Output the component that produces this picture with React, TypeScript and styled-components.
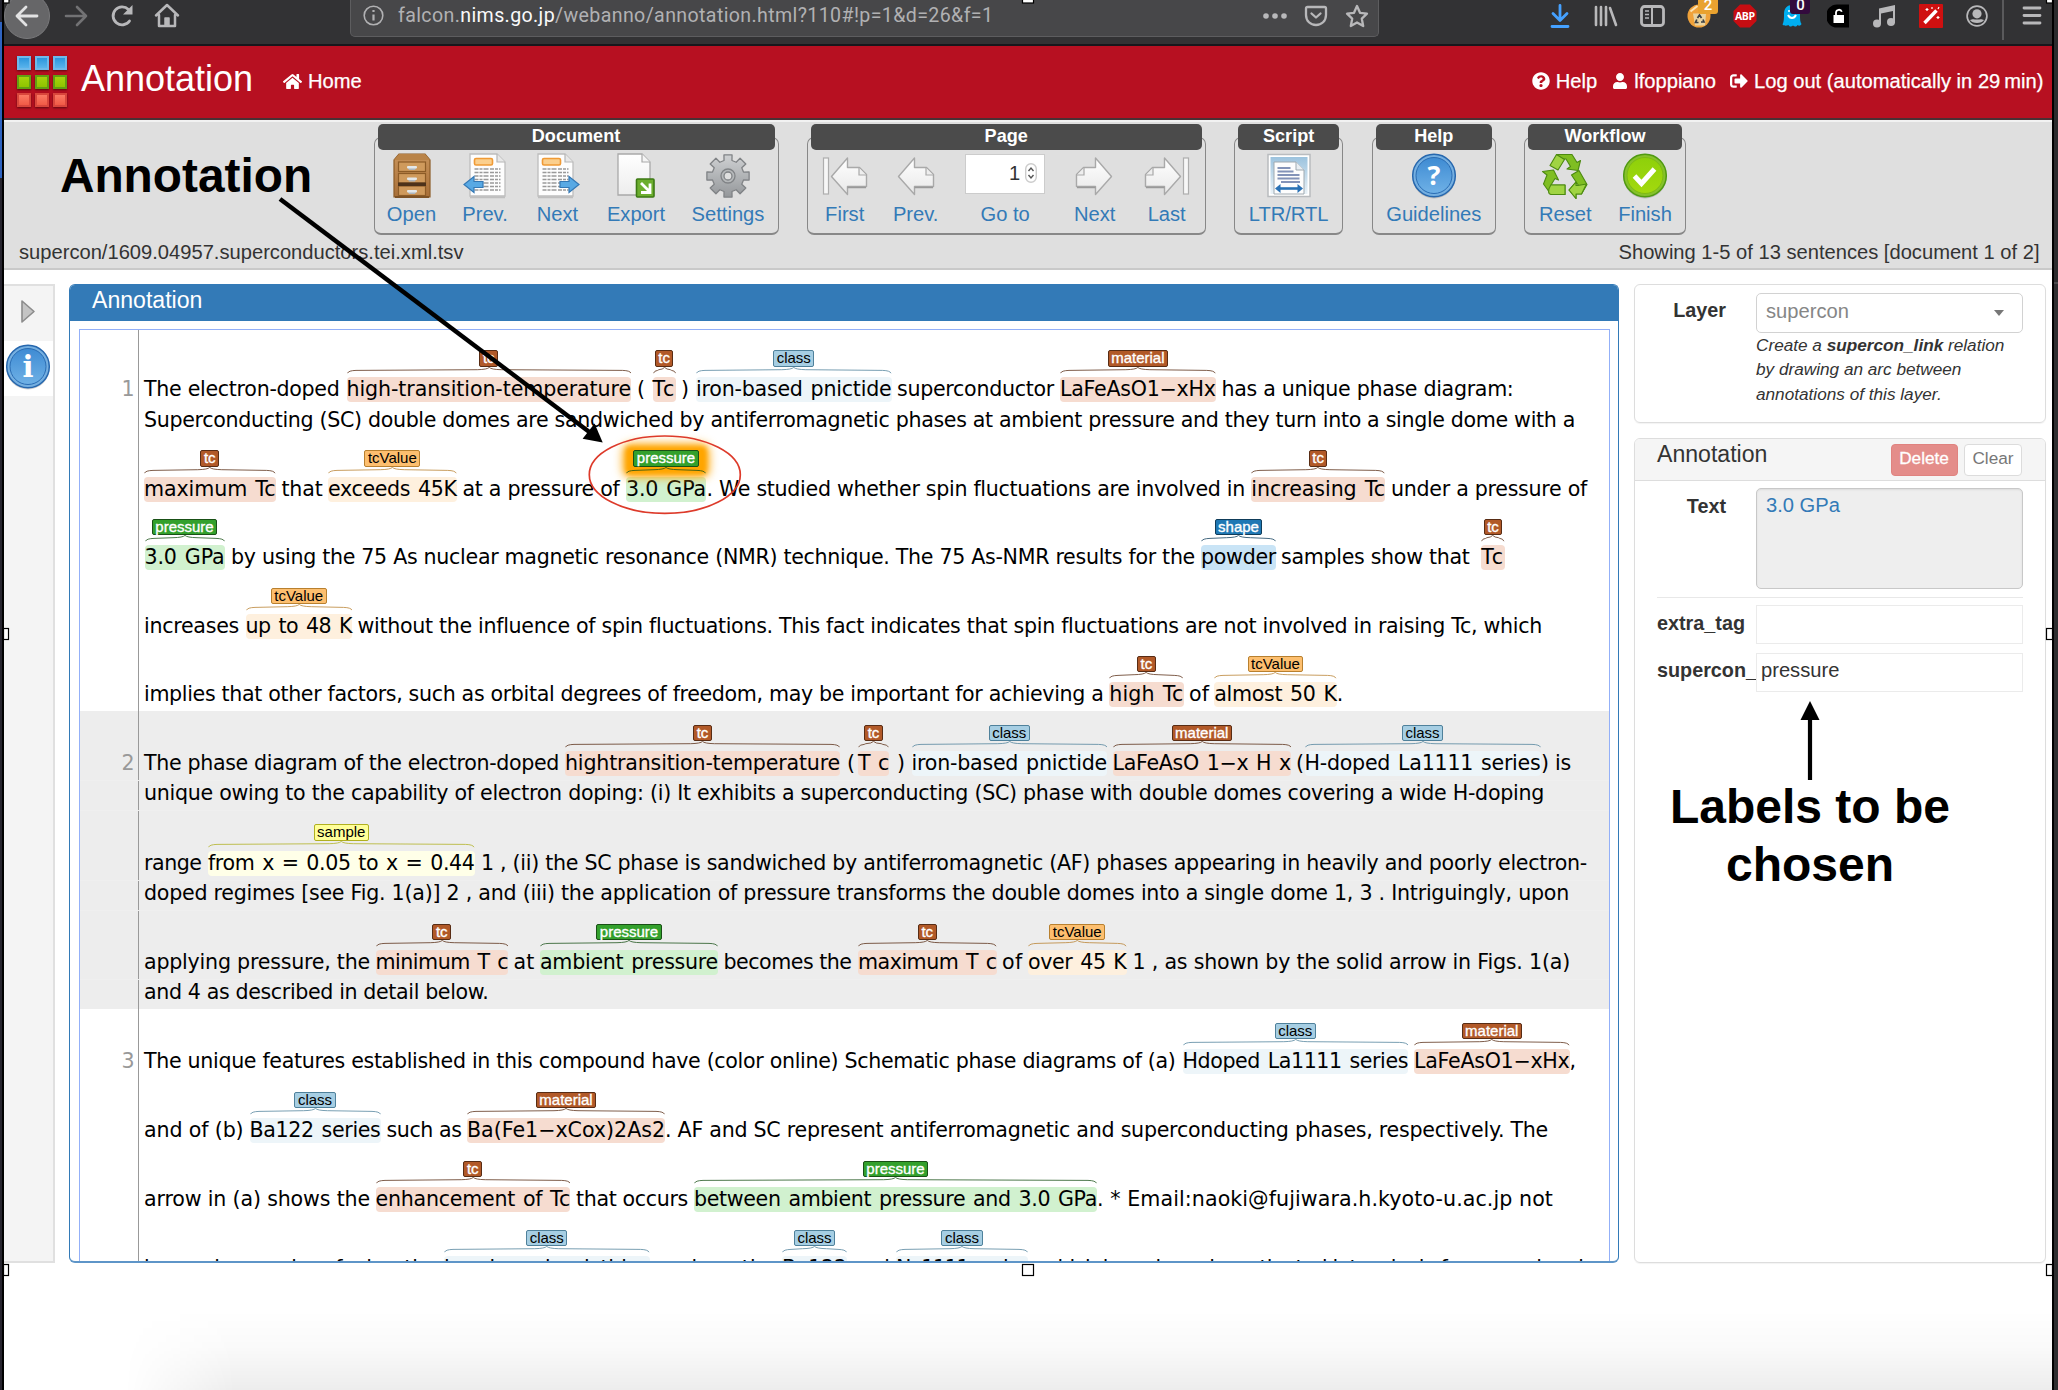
import React, { useLayoutEffect, useRef } from 'react';
import styled, { createGlobalStyle, css } from 'styled-components';
import { FaHome, FaQuestionCircle, FaUser, FaSignOutAlt } from 'react-icons/fa';

const sans = '"Liberation Sans", Arial, sans-serif';
const verdana = 'Verdana, "DejaVu Sans", sans-serif';

const GlobalStyle = createGlobalStyle`
  * { box-sizing: border-box; }
  body { margin: 0; background: #fff; font-family: ${sans}; font-size: 20.15px; color: #333; }
`;

/* ---------- frame ---------- */

const Screen = styled.div`
  position: relative;
  width: 2058px;
  height: 1390px;
  overflow: hidden;
  display: flex;
  background: #fff;
`;
const LeftEdge = styled.div`
  width: 4px;
  flex: none;
  border-right: 2px solid #000;
  background: linear-gradient(#23232e 22px, #2f63c0 22px, #2f63c0 178px, #26242e 178px);
`;
const RightEdge = styled.div`
  width: 6px;
  flex: none;
  border-left: 2px solid #000;
  background: linear-gradient(#2b2b2d 282px, #4a4a4c 282px, #4a4a4c 284px, #2e2e30 284px);
`;
const Window = styled.div`
  width: 2048px;
  flex: none;
  display: flex;
  flex-direction: column;
`;

/* ---------- browser chrome ---------- */

const BrowserBar = styled.div`
  height: 46px;
  flex: none;
  display: flex;
  background: #323234;
  border-bottom: 2px solid #17171c;
  overflow: hidden;
`;
const NavButtons = styled.div`
  width: 346px;
  display: flex;
  height: 31px;
  align-items: center;
  svg { flex: none; }
`;
const BackCircle = styled.div`
  width: 46px;
  height: 46px;
  flex: none;
  border-radius: 50%;
  background: #666668;
  border: 1px solid #7a7a7c;
  display: flex;
  align-items: center;
  justify-content: center;
  margin-right: 12px;
`;
const NavSlot = styled.div<{ $w: number }>`
  width: ${p => p.$w}px;
  display: flex;
  justify-content: center;
`;
const UrlBar = styled.div`
  width: 1029px;
  height: 37px;
  flex: none;
  background: #474749;
  border: 1.5px solid #5d5d5f;
  border-top: 0;
  border-radius: 0 0 5px 5px;
  display: flex;
  align-items: center;
  padding: 0 9px 5px 12px;
  color: #b1b1b3;
`;
const UrlText = styled.div`
  margin-left: 14px;
  flex: 1;
  font: 19.6px/30px Roboto, ${sans};
  letter-spacing: 0.37px;
  white-space: nowrap;
  b { font-weight: 400; color: #f9f9fa; }
`;
const UrlActions = styled.div`
  display: flex;
  gap: 17px;
  align-items: center;
`;
const Extensions = styled.div`
  display: flex;
  height: 31px;
  padding-left: 158px;
`;
const ExtSlot = styled.div`
  width: 46.3px;
  flex: none;
  position: relative;
  display: flex;
  align-items: center;
  justify-content: center;
`;
const Badge = styled.span<{ $bg: string }>`
  position: absolute;
  left: 22px;
  top: -6px;
  width: 20px;
  height: 20px;
  border-radius: 3px;
  background: ${p => p.$bg};
  color: #fff;
  font: 500 15px/22px Roboto, ${sans};
  text-align: center;
`;
const BarDivider = styled.div`
  width: 2px;
  height: 40px;
  margin: 0 13px 0 2px;
  background: #5a5a5c;
`;

/* ---------- page header ---------- */

const Header = styled.header`
  height: 74px;
  flex: none;
  background: #b71021;
  border-bottom: 2px solid #4a3034;
  display: flex;
  align-items: center;
  color: #fff;
  padding: 0 8.5px 0 13px;
  white-space: nowrap;
`;
const LogoGrid = styled.div`
  display: grid;
  grid-template-columns: repeat(3, 14px);
  grid-auto-rows: 14px;
  gap: 4.5px 4px;
  margin-top: -1px;
`;
const tiles = {
  blue: ['#6fb9ea', '#2b95dd', '#5ab4ec'],
  green: ['#62a012', '#a4d20c', '#8fc400'],
  red: ['#d9463c', '#fb7a64', '#f05a46'],
};
const Tile = styled.i<{ $c: keyof typeof tiles }>`
  border: 2.5px solid ${p => tiles[p.$c][0]};
  background: linear-gradient(${p => tiles[p.$c][1]}, ${p => tiles[p.$c][2]});
  box-shadow: 0 1px 2px rgba(0, 0, 0, 0.5);
`;
const AppTitle = styled.h1`
  margin: 0 0 0 14px;
  width: 202px;
  font-size: 36px;
  line-height: 50px;
  font-weight: 400;
  padding-bottom: 6px;
`;
const HeaderLink = styled.a<{ $gap?: number }>`
  display: flex;
  align-items: center;
  gap: 6px;
  margin-right: ${p => p.$gap ?? 0}px;
  -webkit-text-stroke: 0.25px #fff;
  padding-bottom: 2px;
`;
const Push = styled.div`flex: 1;`;

/* ---------- toolbar ---------- */

const ToolbarArea = styled.div`
  height: 150px;
  flex: none;
  background: #dfdfdf;
  border-top: 2px solid #f2f2f2;
  border-bottom: 2px solid #c9c9c9;
  display: flex;
  flex-direction: column;
`;
const Panels = styled.div`
  display: flex;
  gap: 28.2px;
  padding: 2px 0 0 369.5px;
`;
const ToolPanel = styled.section`display: flex; flex-direction: column;`;
const PanelTitle = styled.h2`
  position: relative;
  z-index: 1;
  margin: 0 4px -13px;
  height: 26px;
  border-radius: 5px;
  background: #4b4b4b;
  color: #fff;
  text-align: center;
  font: bold 18.1px/25px ${sans};
`;
const PanelBody = styled.div`
  display: flex;
  height: 98px;
  border: 1.5px solid #888;
  border-bottom-width: 2px;
  border-radius: 7px;
  padding-top: 15.5px;
`;
const ToolButton = styled.a<{ $w: number }>`
  width: ${p => p.$w}px;
  display: flex;
  flex-direction: column;
  align-items: center;
  color: #337ab7;
  line-height: 30px;
  svg { flex: none; }
`;
const IconBox = styled.div`
  height: 45px;
  flex: none;
  display: flex;
  align-items: center;
  justify-content: center;
`;
const PageInput = styled.div`
  width: 80px;
  height: 40px;
  margin-bottom: 5px;
  background: #fff;
  border: 1.5px solid #ccc;
  display: flex;
  align-items: center;
  justify-content: flex-end;
  gap: 5px;
  padding: 0 7px 2px;
  color: #333;
`;
const StatusLine = styled.div`
  display: flex;
  justify-content: space-between;
  padding: 0 12.5px 0 15px;
  margin-top: 5px;
  line-height: 24px;
`;

/* ---------- workspace ---------- */

const Workspace = styled.main`
  display: flex;
  align-items: flex-start;
  padding-top: 14px;
`;
const Sidebar = styled.aside`
  width: 51px;
  height: 979px;
  flex: none;
  background: #f4f4f4;
  border: 2px solid #e0e0e0;
  border-left: 0;
`;
const SideTab = styled.div<{ $active?: boolean }>`
  height: 55px;
  display: flex;
  align-items: center;
  justify-content: center;
  padding: 0 0 3px;
  ${p => p.$active && css`background: #fff; padding: 0 2px 3px 0;`}
`;
const Editor = styled.section`
  width: 1550px;
  height: 979px;
  flex: none;
  margin-left: 14px;
  border: 1.5px solid #337ab7;
  border-bottom: 2px solid #5e95c8;
  border-radius: 6px;
  overflow: hidden;
`;
const EditorTitle = styled.h3`
  margin: 0;
  height: 36px;
  padding-left: 22px;
  background: #337ab7;
  color: #fff;
  font: 400 23.1px/31px ${sans};
`;
const Brat = styled.div`
  margin: 7.5px 8.5px 0;
  border: 1.5px solid #93b0f8;
  height: 1000px;
  background: linear-gradient(90deg, transparent 57.5px, #999 57.5px, #999 59px, transparent 59px);
`;
const Row = styled.div<{ $h: number; $shade?: boolean; $first?: boolean }>`
  height: ${p => p.$h}px;
  display: flex;
  align-items: flex-end;
  padding-bottom: 4px;
  font: 20.6px/25px ${verdana};
  color: #000;
  ${p => p.$shade && css`
    background: linear-gradient(90deg, #ededed 57.5px, #999 57.5px, #999 59px, #ededed 59px);
    ${!p.$first && 'border-top: 1px solid #efefef;'}
  `}
`;
const RowNumber = styled.span`
  width: 55px;
  flex: none;
  text-align: right;
  color: #999;
`;
const Run = styled.span`
  flex: none;
  position: relative;
  display: block;
  white-space: nowrap;
`;

const kinds = {
  tc: { bg: '#b15928', edge: '#582c14', ink: '#fff', wash: '#f6dcd0' },
  material: { bg: '#b15928', edge: '#582c14', ink: '#fff', wash: '#f6dcd0' },
  tcValue: { bg: '#fdbf6f', edge: '#b8802f', ink: '#000', wash: '#fef0de' },
  class: { bg: '#a6cee3', edge: '#4f819b', ink: '#000', wash: '#edf5f9' },
  pressure: { bg: '#33a02c', edge: '#195016', ink: '#fff', wash: '#d1f1cf' },
  shape: { bg: '#1f78b4', edge: '#0f3c5a', ink: '#fff', wash: '#c9e4f6' },
  sample: { bg: '#ffff99', edge: '#b0b020', ink: '#000', wash: '#ffffe8' },
} as const;
type Kind = keyof typeof kinds;

const Mark = styled(Run)<{ $kind: Kind }>`
  background: ${p => kinds[p.$kind].wash};
  border-radius: 4px;
  word-spacing: 1.6px;
`;
const MarkTop = styled.span<{ $glow?: boolean }>`
  position: absolute;
  left: 0;
  right: 0;
  bottom: 100%;
  height: 26.5px;
  display: flex;
  flex-direction: column;
  align-items: center;
  word-spacing: 0;
  ${p => p.$glow && css`
    &::before {
      content: '';
      position: absolute;
      inset: -4px -1px 2px;
      border-radius: 5px;
      box-shadow: 0 0 8px 2px #ffa500;
      background: #ffa500;
      filter: blur(2px);
    }
    > * { position: relative; }
  `}
`;
const Tag = styled.span<{ $kind: Kind }>`
  height: 16.5px;
  padding: 0 2.5px;
  border: 1.2px solid ${p => kinds[p.$kind].edge};
  border-radius: 2px;
  background: ${p => kinds[p.$kind].bg};
  color: ${p => kinds[p.$kind].ink};
  font: 15px/13px ${sans};
  letter-spacing: 0;
  -webkit-text-stroke: ${p => (kinds[p.$kind].ink === '#fff' ? 0.35 : 0)}px #fff;
`;

/* ---------- detail column ---------- */

const Details = styled.aside`
  width: 412px;
  margin-left: 15px;
  flex: none;
`;
const Card = styled.section<{ $h: number }>`
  height: ${p => p.$h}px;
  border: 1.5px solid #ddd;
  border-radius: 6px;
  margin-bottom: 15px;
  box-shadow: 0 1px 1px rgba(0, 0, 0, 0.05);
`;
const CardHeader = styled.div`
  height: 42px;
  background: #f5f5f5;
  border-bottom: 1.5px solid #ddd;
  border-radius: 5px 5px 0 0;
  display: flex;
  align-items: center;
  gap: 6.5px;
  padding: 0 23px 0 22px;
  h4 { margin: 0; flex: 1; padding-bottom: 12px; font: 400 23.1px/30px ${sans}; }
`;
const SmallButton = styled.button<{ $danger?: boolean }>`
  height: 32px;
  width: ${p => (p.$danger ? 67 : 58)}px;
  padding: 0 0 3px;
  font: 17.2px/20px ${sans};
  border-radius: 4px;
  border: 1.5px solid ${p => (p.$danger ? '#e08380' : '#dcdcdc')};
  background: ${p => (p.$danger ? '#e48d8a' : '#fff')};
  color: ${p => (p.$danger ? '#fff' : '#777')};
  -webkit-text-stroke: ${p => (p.$danger ? 0.3 : 0)}px #fff;
`;
const Field = styled.div<{ $top: number }>`
  display: grid;
  grid-template-columns: 99px 267px;
  margin: ${p => p.$top}px 0 0 22px;
`;
const Label = styled.label<{ $right?: boolean }>`
  font-size: 19.8px;
  font-weight: bold;
  line-height: 24px;
  padding: 5.5px ${p => (p.$right ? 30 : 0)}px 0 0;
  text-align: ${p => (p.$right ? 'right' : 'left')};
  overflow: hidden;
  white-space: nowrap;
`;
const Select = styled.div`
  height: 40px;
  border: 1.5px solid #d2d2d2;
  border-radius: 5px;
  color: #868686;
  display: flex;
  justify-content: space-between;
  padding: 0 18px 0 9px;
  line-height: 35px;
  &::after {
    content: '';
    margin-top: 16px;
    height: 0;
    border: 5.5px solid transparent;
    border-top: 6px solid #777;
    border-bottom: 0;
  }
`;
const Hint = styled.p`
  grid-column: 2;
  margin: 0;
  font: italic 17.2px/24.7px ${sans};
  white-space: nowrap;
`;
const TextArea = styled.div`
  height: 101px;
  background: #eee;
  border: 1.5px solid #c8c8c8;
  border-radius: 5px;
  padding: 4px 9px;
  line-height: 25px;
  color: #337ab7;
  box-shadow: inset 0 1px 2px rgba(0, 0, 0, 0.08);
`;
const Rule = styled.hr`
  margin: 7.5px 22px 0;
  border: 0;
  border-top: 1.5px solid #e8e8e8;
`;
const TextInput = styled.div`
  height: 39px;
  border: 1.5px solid #ebebeb;
  padding: 4px 4px;
  line-height: 25px;
`;

/* ---------- annotations drawn on top of the page ---------- */

const Callout = styled.div<{ $x: number; $y: number; $w: number; $size: number }>`
  position: absolute;
  left: ${p => p.$x}px;
  top: ${p => p.$y}px;
  width: ${p => p.$w}px;
  text-align: center;
  color: #000;
  font: bold ${p => p.$size}px/58px ${sans};
`;
const Strokes = styled.svg`
  position: absolute;
  inset: 0;
  pointer-events: none;
`;
const FootShade = styled.div`
  position: absolute;
  left: 125px;
  right: 6px;
  bottom: 0;
  height: 80px;
  background: linear-gradient(transparent, rgba(0, 0, 0, 0.02) 45%, rgba(0, 0, 0, 0.07));
  mask-image: linear-gradient(90deg, transparent, #000 110px);
`;

/* ---------- annotated text ---------- */

/* [start x, end x, text, kind, selected] */
type Piece = [number, number, string, Kind?, boolean?];
interface LineData { h: number; n?: number; shade?: boolean; p: Piece[] }

const lines: LineData[] = [
  { h: 76, n: 1, p: [
    [144, 339.5, 'The electron-doped'], [346.5, 631, 'high-transition-temperature', 'tc'], [637, 645, '('],
    [652.5, 675.7, 'Tc', 'tc'], [681, 690, ')'], [696, 891.5, 'iron-based pnictide', 'class'],
    [897, 1054, 'superconductor'], [1060, 1215.7, 'LaFeAsO1−xHx', 'material'], [1221.5, 1513.5, 'has a unique phase diagram:']] },
  { h: 31, p: [[144, 1575, 'Superconducting (SC) double domes are sandwiched by antiferromagnetic phases at ambient pressure and they turn into a single dome with a']] },
  { h: 69, p: [
    [144, 275.5, 'maximum Tc', 'tc'], [281.5, 322.5, 'that'], [328, 456.7, 'exceeds 45K', 'tcValue'],
    [462.5, 619.5, 'at a pressure of'], [626, 706, '3.0 GPa', 'pressure', true],
    [706.5, 1245, '. We studied whether spin fluctuations are involved in'], [1251.3, 1385, 'increasing Tc', 'tc'],
    [1391, 1587, 'under a pressure of']] },
  { h: 68.5, p: [
    [144.5, 224.5, '3.0 GPa', 'pressure'],
    [231, 1195, 'by using the 75 As nuclear magnetic resonance (NMR) technique. The 75 As-NMR results for the'],
    [1201, 1276, 'powder', 'shape'], [1281, 1469.5, 'samples show that'], [1481.3, 1504.7, 'Tc', 'tc']] },
  { h: 69, p: [
    [144, 239, 'increases'], [245.5, 352, 'up to 48 K', 'tcValue'],
    [357.5, 1542, 'without the influence of spin fluctuations. This fact indicates that spin fluctuations are not involved in raising Tc, which']] },
  { h: 68, p: [
    [144, 1103.5, 'implies that other factors, such as orbital degrees of freedom, may be important for achieving a'],
    [1109.3, 1183.5, 'high Tc', 'tc'], [1189, 1209, 'of'], [1214.3, 1336.7, 'almost 50 K', 'tcValue'], [1336.7, 1343, '.']] },
  { h: 69.3, n: 2, shade: true, p: [
    [144, 559, 'The phase diagram of the electron-doped'], [565, 840, 'hightransition-temperature', 'tc'], [847, 855, '('],
    [858, 889, 'T c', 'tc'], [897, 905, ')'], [911.5, 1107, 'iron-based pnictide', 'class'],
    [1112.5, 1291, 'LaFeAsO 1−x H x', 'material'], [1296, 1304, '('], [1304.5, 1540.5, 'H-doped La1111 series', 'class'],
    [1541, 1571, ') is']] },
  { h: 30.2, shade: true, p: [[144, 1544, 'unique owing to the capability of electron doping: (i) It exhibits a superconducting (SC) phase with double domes covering a wide H-doping']] },
  { h: 69.5, shade: true, p: [
    [144, 201.5, 'range'], [208, 474.5, 'from x = 0.05 to x = 0.44', 'sample'],
    [481, 1587, '1 , (ii) the SC phase is sandwiched by antiferromagnetic (AF) phases appearing in heavily and poorly electron-']] },
  { h: 30, shade: true, p: [[144, 1569, 'doped regimes [see Fig. 1(a)] 2 , and (iii) the application of pressure transforms the double domes into a single dome 1, 3 . Intriguingly, upon']] },
  { h: 69.5, shade: true, p: [
    [144, 370, 'applying pressure, the'], [375.5, 508, 'minimum T c', 'tc'], [513.5, 534.5, 'at'],
    [540, 718, 'ambient pressure', 'pressure'], [723.5, 851.5, 'becomes the'], [858, 996.5, 'maximum T c', 'tc'],
    [1002, 1022.5, 'of'], [1028, 1126.5, 'over 45 K', 'tcValue'], [1132.5, 1570, '1 , as shown by the solid arrow in Figs. 1(a)']] },
  { h: 30, shade: true, p: [[144, 488.5, 'and 4 as described in detail below.']] },
  { h: 69, n: 3, p: [
    [144, 1175.5, 'The unique features established in this compound have (color online) Schematic phase diagrams of (a)'],
    [1182.5, 1408, 'Hdoped La1111 series', 'class'], [1414, 1569.5, 'LaFeAsO1−xHx', 'material'], [1569.5, 1577, ',']] },
  { h: 69, p: [
    [144, 243.5, 'and of (b)'], [249.5, 380.5, 'Ba122 series', 'class'], [386.5, 461.5, 'such as'],
    [467, 665, 'Ba(Fe1−xCox)2As2', 'material'],
    [665, 1548, '. AF and SC represent antiferromagnetic and superconducting phases, respectively. The']] },
  { h: 69, p: [
    [144, 370, 'arrow in (a) shows the'], [375.5, 570, 'enhancement of Tc', 'tc'], [576, 688, 'that occurs'],
    [694, 1097, 'between ambient pressure and 3.0 GPa', 'pressure'], [1097, 1553, '. * Email:naoki@fujiwara.h.kyoto-u.ac.jp not']] },
  { h: 69, p: [
    [144, 438, 'been observed on fusing the'], [444, 649.5, 'iron-based pnictides', 'class'], [656, 776, 'such as the'],
    [782, 847, 'Ba122', 'class'], [853, 889, 'and'], [896, 1028, 'Na1111 series', 'class'],
    [1030, 1583, ', which have been investigated intensively for several and']] },
];

const TEXT_ORIGIN = 134.5;

/* Spreads the glyphs evenly so a run fills the advance width recorded for it. */
function useFittedSpacing(width: number, text: string) {
  const ref = useRef<HTMLSpanElement>(null);
  useLayoutEffect(() => {
    const el = ref.current;
    if (!el) return;
    el.style.letterSpacing = '0px';
    const natural = el.getBoundingClientRect().width;
    el.style.letterSpacing = `${(width - natural) / text.length}px`;
  }, [width, text]);
  return ref;
}

function Brace({ width, color }: { width: number; color: string }) {
  const c = width / 2;
  const shoulder = Math.min(9, width * 0.2);
  const rise = Math.min(12, width * 0.25);
  return (
    <svg width={width} height="7" style={{ flex: 'none' }} fill="none" stroke={color} strokeWidth="0.9" opacity="0.85">
      <path d={`M0.5 6.2 Q1.5 3.6 ${shoulder} 3.4 L${c - rise} 2.7 Q${c - 2} 2.5 ${c} 0.4 Q${c + 2} 2.5 ${c + rise} 2.7 L${width - shoulder} 3.4 Q${width - 1.5} 3.6 ${width - 0.5} 6.2`} />
    </svg>
  );
}

function TextPiece({ piece, prevEnd }: { piece: Piece; prevEnd: number }) {
  const [start, end, text, kind, selected] = piece;
  const width = end - start;
  const ref = useFittedSpacing(width, text);
  const offset = { marginLeft: start - prevEnd };
  if (!kind) return <Run style={offset}><span ref={ref}>{text}</span></Run>;
  return (
    <Mark $kind={kind} style={offset}>
      <MarkTop $glow={selected}>
        <Tag $kind={kind}>{kind}</Tag>
        <Brace width={width} color={kinds[kind].edge} />
      </MarkTop>
      <span ref={ref}>{text}</span>
    </Mark>
  );
}

function TextLine({ line, first }: { line: LineData; first: boolean }) {
  return (
    <Row $h={line.h} $shade={line.shade} $first={first}>
      <RowNumber>{line.n}</RowNumber>
      {line.p.map((piece, i) => (
        <TextPiece key={i} piece={piece} prevEnd={i ? line.p[i - 1][1] : TEXT_ORIGIN} />
      ))}
    </Row>
  );
}

/* ---------- icons ---------- */

const Grad = ({ id, a, b }: { id: string; a: string; b: string }) => (
  <linearGradient id={id} x1="0" y1="0" x2="0" y2="1"><stop stopColor={a} /><stop offset="1" stopColor={b} /></linearGradient>
);

const CabinetIcon = () => (
  <svg width="40" height="46" viewBox="0 0 40 46">
    <defs><Grad id="wood" a="#c8935a" b="#a86f38" /></defs>
    <path d="M7 1h26l5 6v37H2V7z" fill="url(#wood)" stroke="#8d5c27" strokeWidth="1.2" />
    <path d="M7 1h26l5 6H2z" fill="#b98347" />
    {[9, 20.5, 33].map(y => (
      <g key={y}>
        <rect x="6.500" y={y} width="27" height="9.500" fill="#cf9a5c" stroke="#8d5c27" strokeWidth="1.200" />
        <path d={`M15.500 ${y + 5}h9l-1.500 3h-6z`} fill="#aeb6bd" /><rect x="15" y={y + 4} width="10" height="2.500" rx="1" fill="#e4e8ea" />
      </g>
    ))}
    <rect x="6" y="29.500" width="28" height="3.500" fill="#4d321a" />
    <path d="M3 44h34" stroke="#7d5225" strokeWidth="2" />
  </svg>
);

const DocIcon = ({ next }: { next?: boolean }) => (
  <svg width="44" height="46" viewBox="0 0 44 46">
    <g transform={next ? 'translate(-2 0)' : 'translate(3 0)'}>
      <path d="M4 1h27l8 8v34H4z" fill="#fdfdfd" stroke="#bdbdbd" strokeWidth="1.300" />
      <path d="M31 1v8h8" fill="#e8e8e8" stroke="#b5b5b5" strokeWidth="1.200" />
      <path d="M4 44.500h35" stroke="#aaa" strokeWidth="1.500" opacity=".6" />
      <rect x="8.500" y="5.500" width="18" height="6.500" rx="1.500" fill="#fbcf8d" stroke="#f09a35" strokeWidth="1.600" />
      {[16, 19.5, 23, 26.5, 30, 33.500, 37].map(y => <path key={y} d={`M8.500 ${y}h26`} stroke="#999" strokeWidth="1.500" strokeDasharray="4 1 3 1 5 1.500" />)}
    </g>
    <path d={next ? 'M24 28.500h9v-5l10 8-10 8v-5h-9z' : 'M20 28.500h-9v-5l-10 8 10 8v-5h9z'} fill="#58a9e4" stroke="#3478b4" strokeWidth="1.200" />
  </svg>
);

const ExportIcon = () => (
  <svg width="40" height="46" viewBox="0 0 40 46">
    <defs><Grad id="paper" a="#fff" b="#ededed" /></defs>
    <path d="M2 1h24l8 8v33H2z" fill="url(#paper)" stroke="#a9a9a9" strokeWidth="1.300" />
    <path d="M26 1v8h8" fill="#f5f5f5" stroke="#a9a9a9" strokeWidth="1.200" />
    <rect x="20.500" y="26" width="17.500" height="18" rx="1" fill="#6cae2e" stroke="#3d7a14" strokeWidth="1.600" />
    <path d="M25 30l8 8M34 30.500v9h-9" fill="none" stroke="#fff" strokeWidth="2.800" />
  </svg>
);

const GearIcon = () => (
  <svg width="46" height="46" viewBox="-23 -23 46 46">
    <defs><Grad id="steel" a="#cfd1d3" b="#94979a" /></defs>
    <g fill="url(#steel)" stroke="#808386" strokeWidth="1.300">
      <path d={Array.from({ length: 8 }, (_, i) => {
        const t = (i * Math.PI) / 4;
        const pt = (r: number, a: number) => `${(r * Math.sin(a)).toFixed(2)} ${(-r * Math.cos(a)).toFixed(2)}`;
        return `${i ? 'L' : 'M'}${pt(16, t - 0.25)}L${pt(21.5, t - 0.19)}L${pt(21.5, t + 0.19)}L${pt(16, t + 0.25)}`;
      }).join('') + 'Z'} strokeLinejoin="round" />
      <circle r="7" fill="#b5b8ba" />
      <circle r="4" fill="#dfdfdf" />
    </g>
  </svg>
);

const ArrowPage = ({ flip, bar }: { flip?: boolean; bar?: boolean }) => (
  <svg width={bar ? 46 : 43} height="42" viewBox={bar ? '-5 0 46 42' : '0 0 43 42'} style={{ transform: flip ? 'scaleX(-1)' : undefined }}>
    <defs><Grad id="snow" a="#fff" b="#e8e8e8" /></defs>
    {bar && <rect x="-3.500" y="3" width="5" height="36" fill="#f7f7f7" stroke="#aeaeae" strokeWidth="1.200" />}
    <path d="M4 22L20 3.500V13h12l7 7v12H20v8z" transform="translate(.5 -.5)" fill="url(#snow)" stroke="#a9a9a9" strokeWidth="1.400" strokeLinejoin="round" />
    <path d="M32 13v7h7" fill="#eee" stroke="#a9a9a9" strokeWidth="1.200" />
    <path d="M20.500 32.500H39" stroke="#999" strokeWidth="1.500" />
  </svg>
);

const ScriptIcon = () => (
  <svg width="46" height="46" viewBox="0 0 46 46">
    <defs><Grad id="sky" a="#9cc3de" b="#eaf2f7" /></defs>
    <rect x="2" y="1.500" width="42" height="42" fill="#fff" stroke="#b9bcbf" strokeWidth="1.500" />
    <rect x="4.500" y="4" width="37" height="37" fill="url(#sky)" />
    <path d="M8 41V9h22l8 8v24z" fill="#fdfdfd" stroke="#9fa9b0" />
    <path d="M30 9v8h8" fill="#e9eff3" stroke="#9fa9b0" />
    <path d="M11.500 15h13M11.500 18.500h16M11.500 22h22M11.500 25.500h22M15 29h19" stroke="#8393b8" strokeWidth="1.800" />
    <path d="M12 35.500h22" stroke="#2a72b5" strokeWidth="2.600" /><path d="M14.500 31l-5.500 4.500 5.500 4.500zM31.500 31l5.500 4.500-5.500 4.500z" fill="#2a72b5" />
  </svg>
);

const RoundIcon = ({ size, tone, children }: { size: number; tone: 'blue' | 'green'; children: React.ReactNode }) => (
  <svg width={size} height={size} viewBox="0 0 46 46">
    <defs><Grad id="bluefill" a="#3e8bd3" b="#6fb1e6" /><Grad id="greenfill" a="#8ed00a" b="#a3d90e" /></defs>
    <ellipse cx="23" cy="24" rx="21.500" ry="21.500" fill="#777" opacity=".35" />
    <circle cx="23" cy="22.500" r="21.300" fill={tone === 'blue' ? '#75afe0' : '#86c12b'} stroke={tone === 'blue' ? '#2667ae' : '#4f9a10'} strokeWidth="1.500" />
    <circle cx="23" cy="22.500" r="18" fill={`url(#${tone}fill)`} stroke={tone === 'blue' ? '#2a6db4' : '#7dbb12'} strokeWidth="1" />
    {children}
  </svg>
);

const RecycleIcon = () => (
  <svg width="48" height="46" viewBox="0 0 48 46">
    <g fill="#7fbe22" stroke="#4c8a10" strokeWidth="1.100" strokeLinejoin="round">
      <path d="M15.500 1.500H31l5 8 3.500-2L37 17.500 26 16l3.500-2.500L25 6h-4z" />
      <path d="M15.500 1.500L9 12.500l8 4.500 6.500-10.500z" fill="#a0d443" />
      <path d="M1.500 18.500l11-1.500 5 10-3.500-1.500-4 6.500H24v9.500H10L2.500 31l3.500-9z" />
      <path d="M9.800 32H24v9.500H10.500c-3.500 0-4-4-.7-9.500z" fill="#a0d443" />
      <path d="M38 17.500l8 14-5.500 9.500H35v4.500L28 37l7-8v3.500h2.500L30.500 22z" />
      <path d="M36.800 32.500L45.500 31l-5 10H35v4.500L28 37l7-8v3.500z" fill="#a0d443" />
    </g>
  </svg>
);

function Chrome() {
  const grey = '#b8b8ba';
  return (
    <BrowserBar>
      <NavButtons>
        <BackCircle>
          <svg width="24" height="22" fill="none" stroke="#e2e2e3" strokeWidth="2.800" strokeLinecap="round" strokeLinejoin="round"><path d="M22 11H2M11 2l-9 9 9 9" /></svg>
        </BackCircle>
        <NavSlot $w={27}><svg width="24" height="22" fill="none" stroke="#727274" strokeWidth="2.600" strokeLinecap="round" strokeLinejoin="round"><path d="M2 11h20M13 2l9 9-9 9" /></svg></NavSlot>
        <NavSlot $w={66}><svg width="24" height="24" fill="none" stroke={grey} strokeWidth="2.800"><path d="M19.500 17A9 9 0 1 1 18.500 5.500" strokeLinecap="round" /><path d="M22.500 1v9.500H13z" fill={grey} stroke="none" /></svg></NavSlot>
        <NavSlot $w={24}><svg width="26" height="25" fill="none" stroke={grey} strokeWidth="2.500" strokeLinejoin="round" strokeLinecap="round"><path d="M2 12.500L13 2l11 10.500M5 12v11h16V12" /><path d="M11 23v-8h4v8z" fill={grey} strokeWidth="1.500" /></svg></NavSlot>
      </NavButtons>
      <UrlBar>
        <svg width="21" height="21" fill="none" stroke="#b1b1b3" strokeWidth="1.600"><circle cx="10.500" cy="10.500" r="9.300" /><path d="M10.500 9.500v6M10.500 5v2" strokeWidth="2.200" /></svg>
        <UrlText>falcon.<b>nims.go.jp</b>/webanno/annotation.html?110#!p=1&amp;d=26&amp;f=1</UrlText>
        <UrlActions>
          <svg width="24" height="8" fill={grey}><circle cx="3" cy="4" r="2.800" /><circle cx="12" cy="4" r="2.800" /><circle cx="21" cy="4" r="2.800" /></svg>
          <svg width="24" height="22" fill="none" stroke={grey} strokeWidth="2.300" strokeLinecap="round" strokeLinejoin="round"><path d="M2 3.500C2 2.500 2.500 2 3.500 2h17c1 0 1.500.5 1.500 1.500V10c0 6-4.500 10-10 10S2 16 2 10z" /><path d="M7.500 8.500l4.500 4 4.500-4" /></svg>
          <svg width="24" height="24" fill="none" stroke={grey} strokeWidth="2.300" strokeLinejoin="round"><path d="M12 2l3 6.800 7 .9-5.200 5 1.400 7.300L12 18.400 5.800 22l1.400-7.300L2 9.700l7-.9z" /></svg>
        </UrlActions>
      </UrlBar>
      <Extensions>
        <ExtSlot><svg width="20" height="24" fill="none" stroke="#45a1ff" strokeWidth="2.800" strokeLinecap="round" strokeLinejoin="round"><path d="M10 1.500V16M3 9.500l7 7 7-7M2 22.500h16" /></svg></ExtSlot>
        <ExtSlot><svg width="24" height="22" stroke={grey} strokeWidth="2.600" strokeLinecap="round"><path d="M2 2v18M7 2v18M12 2v18M16 3l6 17" /></svg></ExtSlot>
        <ExtSlot><svg width="25" height="22" fill="none" stroke={grey} strokeWidth="2.800"><rect x="1.500" y="1.500" width="22" height="19" rx="3" /><path d="M12 2v18" strokeWidth="2" /><path d="M5 6h4M5 9.500h4M5 13h4" strokeWidth="1.500" /></svg></ExtSlot>
        <ExtSlot>
          <svg width="24" height="24"><circle cx="12" cy="12" r="11.500" fill="#f0a23a" /><path d="M3.500 7.500l7-5.500" stroke="#fbe3b5" strokeWidth="2" /><path d="M6 9.500h13l-1 12H8z" fill="#e9d3a0" /><g fill="none" stroke="#3a3f45" strokeWidth="1.700"><path d="M10.500 14l2-3 2 3M16 15.500l1 2.500h-3M11.500 18.500h-3l1.300-3" /></g></svg>
          <Badge $bg="#e9a22f">2</Badge>
        </ExtSlot>
        <ExtSlot>
          <svg width="24" height="24"><path d="M7 .5h10l6.500 6.500v10L17 23.500H7L.5 17V7z" fill="#c70d12" /><text x="12" y="16" fill="#fff" fontFamily="Open Sans, sans-serif" fontWeight="700" fontSize="10.500" textAnchor="middle" textLength="20">ABP</text></svg>
        </ExtSlot>
        <ExtSlot>
          <svg width="20" height="24"><path d="M2 10C2 4 5.500 1 10 1s8 3 8 9c0 5 0 8 1.500 10-1 2-2.500 2-4 1-1 2-3 2-4.500.5-1.500 1.500-3.500 1.500-4.500-.5-2 1-4.500 1-6-.5C2 18 2 14 2 10z" fill="#00aef0" /><path d="M6 11c2 4 6 4 8 0" fill="none" stroke="#fff" strokeWidth="2" /><circle cx="7" cy="7" r="1" fill="#fff" /><circle cx="12.500" cy="7" r="1" fill="#fff" /></svg>
          <Badge $bg="#330a3d">0</Badge>
        </ExtSlot>
        <ExtSlot><svg width="22" height="24"><path d="M22 .5v23H10A11 11.500 0 0 1 10 .5z" fill="#000" /><rect x="6.500" y="11" width="10.500" height="8" fill="#fff" /><path d="M9 11V8.500a3 3 0 0 1 5.800-.8" fill="none" stroke="#fff" strokeWidth="1.800" /></svg></ExtSlot>
        <ExtSlot><svg width="24" height="24" fill={grey}><path d="M7 4.500L23 1v18h-2V7L9 9.500V20H7z" /><circle cx="5" cy="19.500" r="4" /><circle cx="19" cy="18" r="4" /></svg></ExtSlot>
        <ExtSlot><svg width="24" height="24"><rect width="24" height="24" rx="1" fill="#cf1010" /><path d="M5.500 19L17.500 6.500" stroke="#fff" strokeWidth="3.400" /><path d="M8 4v3M6.500 5.500h3M13 3v2M19 12v3M17.500 13.500h3M20 3l-1 2" stroke="#fff" strokeWidth="1.200" /></svg></ExtSlot>
        <ExtSlot><svg width="22" height="22"><circle cx="11" cy="11" r="9.900" fill="none" stroke={grey} strokeWidth="1.700" /><circle cx="11" cy="8.800" r="4.600" fill={grey} /><path d="M4 15c3-1.500 4-.5 7-.5s4-1 7 .5c-2 4-12 4-14 0z" fill={grey} /></svg></ExtSlot>
        <BarDivider />
        <NavSlot $w={30}><svg width="20" height="31" stroke={grey} strokeWidth="2.800" strokeLinecap="round"><path d="M2 8h16M2 15.500h16M2 23h16" /></svg></NavSlot>
      </Extensions>
    </BrowserBar>
  );
}

const Tool = ({ w, label, children }: { w: number; label: string; children: React.ReactNode }) => (
  <ToolButton $w={w}><IconBox>{children}</IconBox>{label}</ToolButton>
);
const Group = ({ title, children }: { title: string; children: React.ReactNode }) => (
  <ToolPanel><PanelTitle>{title}</PanelTitle><PanelBody>{children}</PanelBody></ToolPanel>
);

function Toolbar() {
  return (
    <ToolbarArea>
      <Panels>
        <Group title="Document">
          <Tool w={74} label="Open"><CabinetIcon /></Tool>
          <Tool w={73} label="Prev."><DocIcon /></Tool>
          <Tool w={72} label="Next"><DocIcon next /></Tool>
          <Tool w={85} label="Export"><ExportIcon /></Tool>
          <Tool w={99} label="Settings"><GearIcon /></Tool>
        </Group>
        <Group title="Page">
          <Tool w={74} label="First"><ArrowPage bar /></Tool>
          <Tool w={68} label="Prev."><ArrowPage /></Tool>
          <Tool w={111} label="Go to">
            <PageInput>1
              <svg width="12" height="20" fill="none" stroke="#555" strokeWidth="1.400"><rect x=".7" y=".7" width="10.600" height="18.600" rx="5.300" stroke="#ccc" /><path d="M3.500 8L6 5l2.500 3M3.500 12L6 15l2.500-3" /></svg>
            </PageInput>
          </Tool>
          <Tool w={68} label="Next"><ArrowPage flip /></Tool>
          <Tool w={76} label="Last"><ArrowPage flip bar /></Tool>
        </Group>
        <Group title="Script"><Tool w={107.5} label="LTR/RTL"><ScriptIcon /></Tool></Group>
        <Group title="Help">
          <Tool w={122.5} label="Guidelines">
            <RoundIcon size={46} tone="blue"><text x="23" y="32" textAnchor="middle" fontFamily="Open Sans" fontWeight="700" fontSize="27" fill="#fff">?</text></RoundIcon>
          </Tool>
        </Group>
        <Group title="Workflow">
          <Tool w={80} label="Reset"><RecycleIcon /></Tool>
          <Tool w={79.5} label="Finish"><RoundIcon size={46} tone="green"><path d="M12.500 23l7 7.500L32.500 16" fill="none" stroke="#fff" strokeWidth="5" /></RoundIcon></Tool>
        </Group>
      </Panels>
      <StatusLine>
        <span>supercon/1609.04957.superconductors.tei.xml.tsv</span>
        <span>Showing 1-5 of 13 sentences [document 1 of 2]</span>
      </StatusLine>
    </ToolbarArea>
  );
}

export default function App() {
  return (
    <Screen>
      <GlobalStyle />
      <LeftEdge />
      <Window>
        <Chrome />
        <Header>
          <LogoGrid>
            {(['blue', 'green', 'red'] as const).flatMap(c => [0, 1, 2].map(i => <Tile key={c + i} $c={c} />))}
          </LogoGrid>
          <AppTitle>Annotation</AppTitle>
          <HeaderLink><FaHome size={19} />Home</HeaderLink>
          <Push />
          <HeaderLink $gap={15}><FaQuestionCircle size={18} />Help</HeaderLink>
          <HeaderLink $gap={14}><FaUser size={16} />lfoppiano</HeaderLink>
          <HeaderLink><FaSignOutAlt size={18} />Log out (automatically in 29&#8201;min)</HeaderLink>
        </Header>
        <Toolbar />
        <Workspace>
          <Sidebar>
            <SideTab>
              <svg width="18" height="26"><path d="M2 2l12 10.500L2 23z" fill="#c4c4c4" stroke="#8c8c8c" strokeWidth="1.600" strokeLinejoin="round" /></svg>
            </SideTab>
            <SideTab $active>
              <RoundIcon size={46} tone="blue"><text x="23" y="33" textAnchor="middle" fontFamily="DejaVu Serif" fontWeight="700" fontSize="29" fill="#fff">i</text></RoundIcon>
            </SideTab>
          </Sidebar>
          <Editor>
            <EditorTitle>Annotation</EditorTitle>
            <Brat>
              {lines.map((line, i) => <TextLine key={i} line={line} first={i === 6} />)}
            </Brat>
          </Editor>
          <Details>
            <Card $h={139}>
              <Field $top={7.5}>
                <Label $right>Layer</Label>
                <Select>supercon</Select>
                <Hint>Create a <b>supercon_link</b> relation<br />by drawing an arc between<br />annotations of this layer.</Hint>
              </Field>
            </Card>
            <Card $h={825}>
              <CardHeader>
                <h4>Annotation</h4>
                <SmallButton $danger>Delete</SmallButton>
                <SmallButton>Clear</SmallButton>
              </CardHeader>
              <Field $top={7}><Label $right>Text</Label><TextArea>3.0 GPa</TextArea></Field>
              <Rule />
              <Field $top={7.5}><Label>extra_tag</Label><TextInput /></Field>
              <Field $top={8.5}><Label>supercon_</Label><TextInput>pressure</TextInput></Field>
            </Card>
          </Details>
        </Workspace>
      </Window>
      <RightEdge />
      <FootShade />
      <Callout $x={51} $y={146.5} $w={270} $size={47.8}>Annotation</Callout>
      <Callout $x={1640} $y={778} $w={340} $size={48}>Labels to be chosen</Callout>
      <Strokes width="2058" height="1390">
        <path d="M280 199L592 434" stroke="#000" strokeWidth="4.500" />
        <path d="M602.700 442.500L582.600 438.700L594.600 423.500z" />
        <path d="M1810 780V716" stroke="#000" strokeWidth="4.200" />
        <path d="M1810 701l9.500 19h-19z" />
        <ellipse cx="664.800" cy="474.700" rx="75.500" ry="38.700" fill="none" stroke="#dd3a2a" strokeWidth="1.700" />
        <g fill="#fff" stroke="#000" strokeWidth="1.200">
          <rect x="3.500" y="-8" width="5.500" height="11" /><rect x="1022.500" y="-8" width="11" height="11" /><rect x="2046.500" y="-8" width="6" height="11" />
          <rect x="3.500" y="628.500" width="5" height="11" /><rect x="2046.500" y="628.500" width="6" height="11" />
          <rect x="3.500" y="1264.500" width="5" height="11" /><rect x="1022.500" y="1264.500" width="11" height="11" /><rect x="2046.500" y="1264.500" width="6" height="11" />
        </g>
      </Strokes>
    </Screen>
  );
}
